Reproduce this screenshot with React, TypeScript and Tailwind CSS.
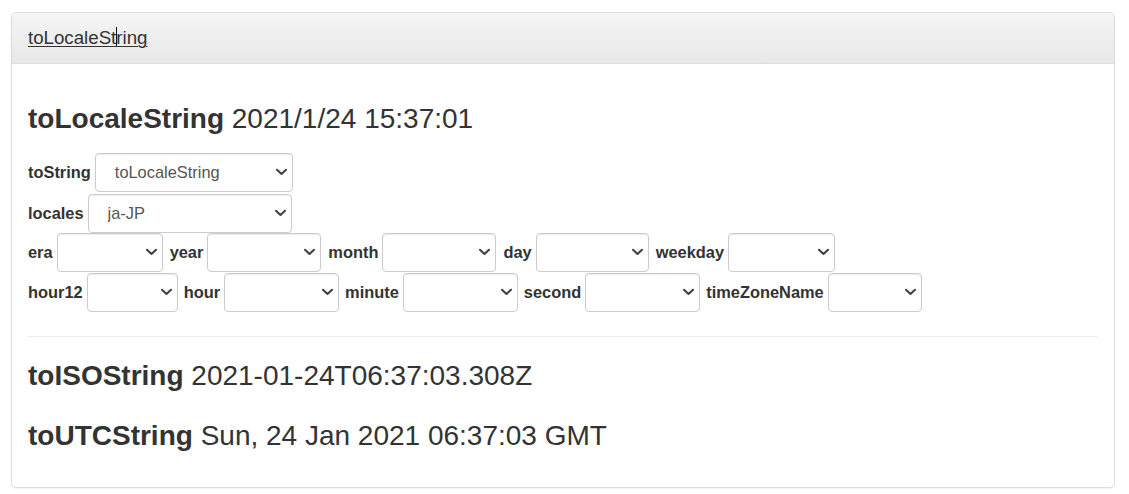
import React from "react";

const FONT = { fontFamily: '"Liberation Sans", Arial, Helvetica, sans-serif' };

function Select({ w, value }: { w: string; value?: string }) {
  return (
    <div className={`relative h-[39px] shrink-0 ${w}`}>
      <select
        defaultValue={value ?? ""}
        className="h-full w-full appearance-none rounded-[4px] border border-[#ccc] bg-white pl-[19px] pr-[24px] text-[16.4px] text-[#555] shadow-[inset_0_1px_1px_rgba(0,0,0,0.075)] outline-none"
        style={FONT}
      >
        <option value={value ?? ""}>{value ?? ""}</option>
      </select>
      <svg
        className="pointer-events-none absolute right-[6px] top-1/2 -translate-y-1/2"
        width="11"
        height="7"
        viewBox="0 0 11 7"
        fill="none"
      >
        <path d="M1 1.2 L5.5 5.5 L10 1.2" stroke="#444" strokeWidth="2.1" strokeLinecap="round" strokeLinejoin="round" />
      </svg>
    </div>
  );
}

function Field({ label, w, value }: { label: string; w: string; value?: string }) {
  return (
    <div className="flex items-center gap-[4px]">
      <span className="text-[16.4px] font-bold text-[#333]">{label}</span>
      <Select w={w} value={value} />
    </div>
  );
}

export default function App() {
  return (
    <div className="h-[494px] w-[1129px] bg-white pl-[11px] pt-[12px] text-[#333]" style={FONT}>
      <div className="h-[476px] w-[1104px] rounded-[5px] border border-[#dcdcdc] shadow-[0_1px_2px_rgba(0,0,0,0.06)]">
        <div className="flex h-[51px] items-center rounded-t-[4px] border-b border-[#ddd] bg-gradient-to-b from-[#f5f5f5] to-[#e8e8e8] px-[16px]">
          <span className="relative text-[18.7px] text-[#333] underline decoration-1 underline-offset-[2px]">
            toLocaleString
            <span className="absolute left-[88px] top-[3px] h-[19px] w-px bg-[#111]" />
          </span>
        </div>
        <div className="px-[16px] pt-[40px]">
          <h3 className="text-[28px] leading-[1.1]">
            <b>toLocaleString</b> 2021/1/24 15:37:01
          </h3>
          <div className="mt-[18px] flex flex-col">
            <div className="flex h-[41px] items-start">
              <Field label="toString" w="w-[198px]" value="toLocaleString" />
            </div>
            <div className="flex h-[39px] items-start">
              <Field label="locales" w="w-[204px]" value="ja-JP" />
            </div>
            <div className="flex h-[40px] items-start gap-[7px]">
              <Field label="era" w="w-[106px]" />
              <Field label="year" w="w-[114px]" />
              <Field label="month" w="w-[114px]" />
              <Field label="day" w="w-[113px]" />
              <Field label="weekday" w="w-[107px]" />
            </div>
            <div className="flex h-[39px] items-start gap-[6px]">
              <Field label="hour12" w="w-[91px]" />
              <Field label="hour" w="w-[115px]" />
              <Field label="minute" w="w-[115px]" />
              <Field label="second" w="w-[115px]" />
              <Field label="timeZoneName" w="w-[94px]" />
            </div>
          </div>
          <hr className="mt-[24px] border-t border-[#eee]" />
          <h3 className="mt-[24px] text-[28px] leading-[1.1]">
            <b>toISOString</b> 2021-01-24T06:37:03.308Z
          </h3>
          <h3 className="mt-[29px] text-[28px] leading-[1.1]">
            <b>toUTCString</b> Sun, 24 Jan 2021 06:37:03 GMT
          </h3>
        </div>
      </div>
    </div>
  );
}
